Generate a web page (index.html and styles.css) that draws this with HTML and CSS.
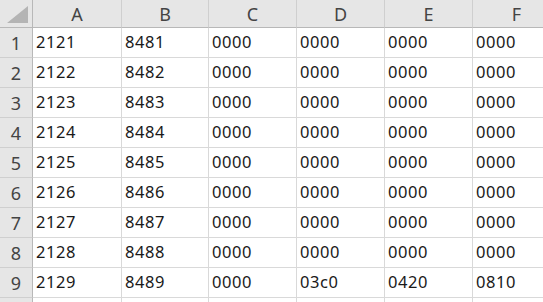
FILE: index.html
```html
<!DOCTYPE html>
<html lang="ja">
<head>
<meta charset="utf-8">
<link rel="stylesheet" href="styles.css">
</head>
<body>
<div class="sheet">
  <div class="corner"><svg class="tri" width="22" height="18" viewBox="0 0 22 18"><polygon points="21,0 21,17 0,17" fill="#b4b4b4"/></svg></div>
  <div class="colh">A</div><div class="colh">B</div><div class="colh">C</div><div class="colh">D</div><div class="colh">E</div><div class="colh">F</div>

  <div class="rowh">1</div><div class="cell">2121</div><div class="cell">8481</div><div class="cell">0000</div><div class="cell">0000</div><div class="cell">0000</div><div class="cell">0000</div>
  <div class="rowh">2</div><div class="cell">2122</div><div class="cell">8482</div><div class="cell">0000</div><div class="cell">0000</div><div class="cell">0000</div><div class="cell">0000</div>
  <div class="rowh">3</div><div class="cell">2123</div><div class="cell">8483</div><div class="cell">0000</div><div class="cell">0000</div><div class="cell">0000</div><div class="cell">0000</div>
  <div class="rowh">4</div><div class="cell">2124</div><div class="cell">8484</div><div class="cell">0000</div><div class="cell">0000</div><div class="cell">0000</div><div class="cell">0000</div>
  <div class="rowh">5</div><div class="cell">2125</div><div class="cell">8485</div><div class="cell">0000</div><div class="cell">0000</div><div class="cell">0000</div><div class="cell">0000</div>
  <div class="rowh">6</div><div class="cell">2126</div><div class="cell">8486</div><div class="cell">0000</div><div class="cell">0000</div><div class="cell">0000</div><div class="cell">0000</div>
  <div class="rowh">7</div><div class="cell">2127</div><div class="cell">8487</div><div class="cell">0000</div><div class="cell">0000</div><div class="cell">0000</div><div class="cell">0000</div>
  <div class="rowh">8</div><div class="cell">2128</div><div class="cell">8488</div><div class="cell">0000</div><div class="cell">0000</div><div class="cell">0000</div><div class="cell">0000</div>
  <div class="rowh">9</div><div class="cell">2129</div><div class="cell">8489</div><div class="cell">0000</div><div class="cell">03c0</div><div class="cell">0420</div><div class="cell">0810</div>
  <div class="rowh"></div><div class="cell"></div><div class="cell"></div><div class="cell"></div><div class="cell"></div><div class="cell"></div><div class="cell"></div>
</div>
</body>
</html>
```

FILE: styles.css
```css
html, body {
  margin: 0;
  padding: 0;
  background: #ffffff;
  overflow: hidden;
}
.sheet {
  display: grid;
  grid-template-columns: 33px 89px 87px 88px 88px 88px 88px;
  grid-template-rows: 28px repeat(10, 30px);
  font-family: "Noto Sans", "Noto Sans CJK JP", sans-serif;
  font-size: 16.5px;
  color: #1a1a1a;
  width: 561px;
}
.sheet > div {
  box-sizing: border-box;
  display: flex;
  align-items: center;
  border-right: 1px solid #d9d9d9;
  border-bottom: 1px solid #d9d9d9;
}
.corner {
  background: #e6e6e6;
  border-bottom-color: #b8b8b8 !important;
  border-right-color: #b8b8b8 !important;
  justify-content: flex-end;
  align-items: flex-end !important;
  padding: 0 3px 3px 0;
}
.tri { display: block; }
.colh {
  background: #e6e6e6;
  justify-content: center;
  color: #444;
  font-size: 18px;
  border-bottom-color: #b8b8b8 !important;
  border-right-color: #cfcfcf !important;
}
.rowh {
  background: #e6e6e6;
  justify-content: center;
  color: #444;
  font-size: 18px;
  border-right-color: #b8b8b8 !important;
  border-bottom-color: #cfcfcf !important;
}
.cell {
  padding-left: 3px;
  line-height: 1;
  letter-spacing: 0.6px;
}
```
